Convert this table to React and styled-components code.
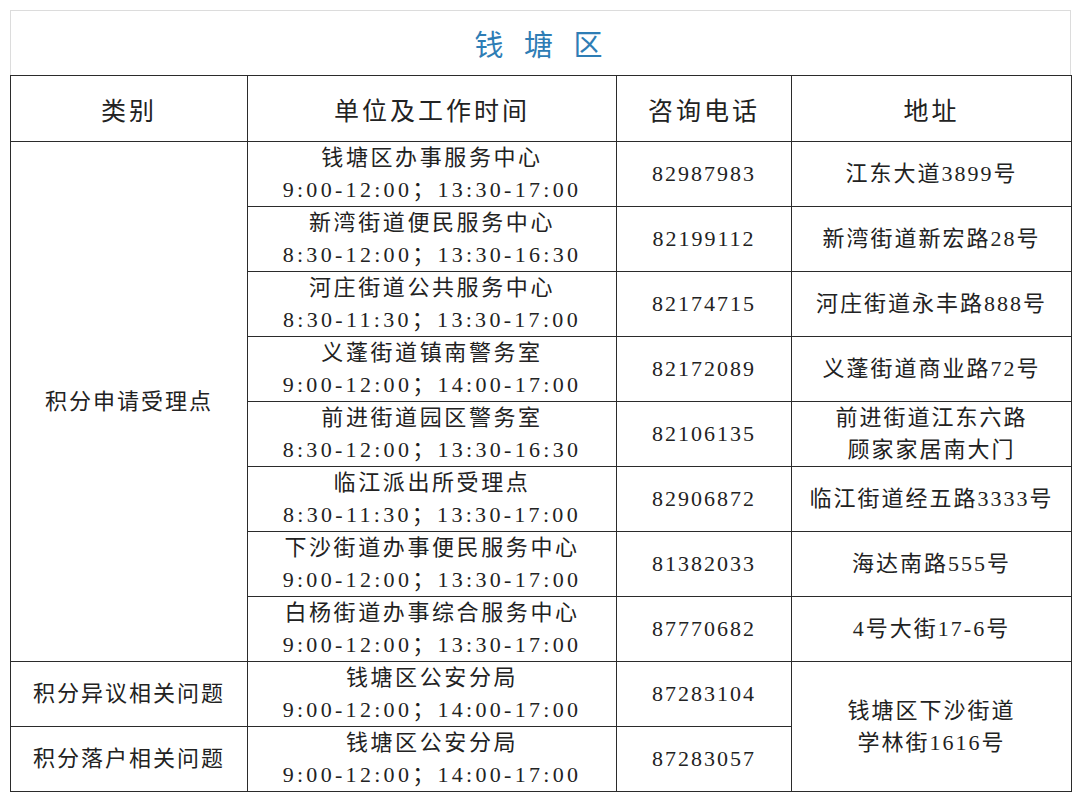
import React from 'react';
import styled, { createGlobalStyle } from 'styled-components';

const GlobalStyle = createGlobalStyle`
  body {
    margin: 0;
    background: #fff;
  }
`;

const Page = styled.div`
  padding: 10px 9px 10px 10px;
  font-family: 'Liberation Serif', 'Noto Sans CJK SC', serif;
  color: #222;
`;

const Title = styled.div`
  height: 64px;
  border: 1px solid #dcdcdc;
  border-bottom: none;
  display: flex;
  align-items: center;
  justify-content: center;
  font-family: 'Noto Sans CJK SC', sans-serif;
  font-size: 29px;
  letter-spacing: 4px;
  word-spacing: 6px;
  color: #2e7db5;
`;

const Table = styled.table`
  width: 1061px;
  border-collapse: collapse;
  table-layout: fixed;
  font-size: 22px;
  letter-spacing: 2px;
`;

const HeadCell = styled.th`
  height: 63px;
  border: 1.5px solid #2b2b2b;
  font-family: 'Noto Sans CJK SC', sans-serif;
  font-weight: 400;
  font-size: 25px;
  letter-spacing: 3px;
  text-align: center;
`;

const Cell = styled.td`
  height: 63px;
  border: 1.5px solid #2b2b2b;
  text-align: center;
  vertical-align: middle;
  line-height: 32px;
  padding: 0;
  font-family: 'Liberation Serif', 'Noto Sans CJK SC', serif;
  letter-spacing: 2px;
`;

const Line = styled.div`
  white-space: nowrap;
  letter-spacing: ${({ $spacing }) => $spacing || 'inherit'};
`;

const rows = [
  ['钱塘区办事服务中心', '9:00-12:00；13:30-17:00', '82987983', ['江东大道3899号']],
  ['新湾街道便民服务中心', '8:30-12:00；13:30-16:30', '82199112', ['新湾街道新宏路28号']],
  ['河庄街道公共服务中心', '8:30-11:30；13:30-17:00', '82174715', ['河庄街道永丰路888号']],
  ['义蓬街道镇南警务室', '9:00-12:00；14:00-17:00', '82172089', ['义蓬街道商业路72号']],
  ['前进街道园区警务室', '8:30-12:00；13:30-16:30', '82106135', ['前进街道江东六路', '顾家家居南大门']],
  ['临江派出所受理点', '8:30-11:30；13:30-17:00', '82906872', ['临江街道经五路3333号']],
  ['下沙街道办事便民服务中心', '9:00-12:00；13:30-17:00', '81382033', ['海达南路555号']],
  ['白杨街道办事综合服务中心', '9:00-12:00；13:30-17:00', '87770682', ['4号大街17-6号']],
];

const Unit = ({ name, time }) => (
  <Cell>
    <Line $spacing="2.6px">{name}</Line>
    <Line $spacing="3.3px">{time}</Line>
  </Cell>
);

export default function App() {
  return (
    <Page>
      <GlobalStyle />
      <Title>钱 塘 区</Title>
      <Table>
        <colgroup>
          <col style={{ width: 237 }} />
          <col style={{ width: 369 }} />
          <col style={{ width: 175 }} />
          <col style={{ width: 280 }} />
        </colgroup>
        <thead>
          <tr>
            <HeadCell>类别</HeadCell>
            <HeadCell>单位及工作时间</HeadCell>
            <HeadCell>咨询电话</HeadCell>
            <HeadCell>地址</HeadCell>
          </tr>
        </thead>
        <tbody>
          {rows.map(([name, time, phone, addr], i) => (
            <tr key={name}>
              {i === 0 && <Cell rowSpan={rows.length}>积分申请受理点</Cell>}
              <Unit name={name} time={time} />
              <Cell>{phone}</Cell>
              <Cell>
                {addr.map((a) => (
                  <Line key={a}>{a}</Line>
                ))}
              </Cell>
            </tr>
          ))}
          <tr>
            <Cell>积分异议相关问题</Cell>
            <Unit name="钱塘区公安分局" time="9:00-12:00；14:00-17:00" />
            <Cell>87283104</Cell>
            <Cell rowSpan={2}>
              <Line>钱塘区下沙街道</Line>
              <Line>学林街1616号</Line>
            </Cell>
          </tr>
          <tr>
            <Cell>积分落户相关问题</Cell>
            <Unit name="钱塘区公安分局" time="9:00-12:00；14:00-17:00" />
            <Cell>87283057</Cell>
          </tr>
        </tbody>
      </Table>
    </Page>
  );
}
